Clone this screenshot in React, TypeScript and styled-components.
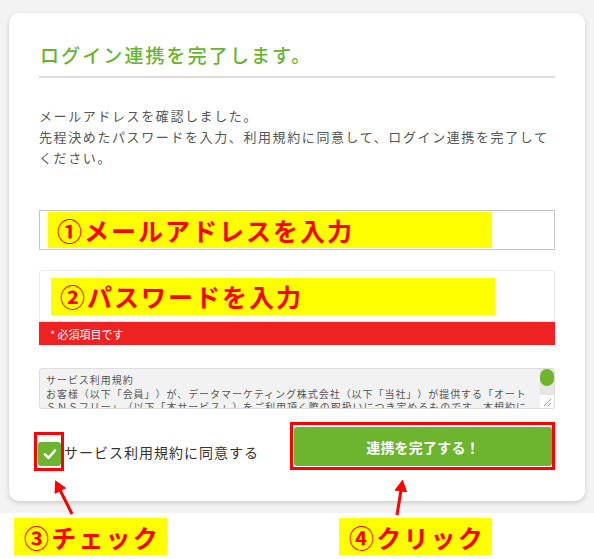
import React from 'react'
import styled, { createGlobalStyle } from 'styled-components'

const GlobalStyle = createGlobalStyle`
  html, body {
    margin: 0;
    padding: 0;
    background: #ffffff;
  }

  body {
    font-family: 'Noto Sans CJK JP', 'Noto Sans', sans-serif;
    text-spacing-trim: space-all;
  }
`

const GREEN = '#6db52e'

const Screen = styled.div`
  position: relative;
  width: 594px;
  height: 559px;
  overflow: hidden;
`

const Backdrop = styled.div`
  background: #f3f3f3;
  padding: 13px 9px 12px 9px;
`

const Card = styled.div`
  background: #ffffff;
  border-radius: 10px;
  box-shadow: 0 2px 5px rgba(0, 0, 0, 0.16);
  padding: 30px 30px 31px 30px;
`

const Title = styled.h2`
  margin: 0;
  padding: 0 0 9px 1px;
  border-bottom: 2px solid #dcdcdc;
  color: #6ab42d;
  font-size: 19px;
  line-height: 24px;
  font-weight: 500;
  letter-spacing: 2.1px;
`

const Lead = styled.p`
  margin: 27px 0 0 0;
  color: #555555;
  font-size: 13px;
  line-height: 21px;
  letter-spacing: 1.6px;
`

const Field = styled.div<{ $height: number; $soft?: boolean }>`
  display: flex;
  align-items: center;
  height: ${(p) => p.$height}px;
  box-sizing: border-box;
  border: 1px solid ${(p) => (p.$soft ? '#ececec' : '#c6c6c6')};
  border-radius: ${(p) => (p.$soft ? '3px 3px 0 0' : '0')};
  padding-left: ${(p) => (p.$soft ? 11 : 8)}px;
`

const EmailField = styled(Field)`
  margin-top: 42px;
`

const PasswordGroup = styled.div`
  margin-top: 20px;
`

const Marker = styled.span<{ $width: number; $height: number }>`
  display: flex;
  align-items: center;
  width: ${(p) => p.$width}px;
  height: ${(p) => p.$height}px;
  box-sizing: border-box;
  padding-left: 9px;
  background: #ffff00;
  color: #ff0000;
  font-size: 25px;
  font-weight: 700;
  letter-spacing: 2px;
  white-space: nowrap;
`

const ErrorBar = styled.div`
  height: 23px;
  display: flex;
  align-items: center;
  padding-left: 11px;
  background: #ee2222;
  color: #ffffff;
  font-size: 11px;
`

const TermsBox = styled.div`
  display: flex;
  margin-top: 23px;
  height: 41px;
  box-sizing: border-box;
  border: 1px solid #dddddd;
  border-radius: 3px;
  background: #f2f2f2;
  overflow: hidden;
`

const Terms = styled.textarea`
  flex: 1;
  min-width: 0;
  margin: 0;
  padding: 4px 4px 0 6px;
  border: 0;
  background: transparent;
  color: #555555;
  font-family: 'Noto Sans CJK JP', sans-serif;
  font-size: 10px;
  line-height: 13.5px;
  letter-spacing: 0.95px;
  text-spacing-trim: space-all;
  resize: none;
  overflow: hidden;
  outline: none;
`

const Rail = styled.div`
  display: flex;
  flex-direction: column;
  width: 14px;
  background: #e6e6e6;
`

const Thumb = styled.span`
  display: block;
  height: 17px;
  border-radius: 7px;
  background: #6fb52c;
`

const Grip = styled.span`
  display: flex;
  margin-top: auto;
  height: 13px;
  background: #ffffff;
`

const ActionRow = styled.div`
  display: flex;
  align-items: flex-end;
  justify-content: space-between;
  margin-top: 13px;
`

const AgreeLabel = styled.label`
  display: flex;
  align-items: center;
  margin: 0 0 -1px -5px;
  color: #333333;
  font-size: 14px;
  letter-spacing: 1px;
`

const RedFrame = styled.span<{ $pad: string }>`
  display: flex;
  align-items: flex-start;
  border: 3px solid #ff0000;
  padding: ${(p) => p.$pad};
`

const CheckBox = styled.span`
  display: flex;
  align-items: center;
  justify-content: center;
  width: 23px;
  height: 24px;
  border-radius: 3px;
  background: ${GREEN};
`

const Submit = styled.button`
  width: 258px;
  height: 39px;
  border: 0;
  border-radius: 3px;
  background: ${GREEN};
  color: #ffffff;
  font-family: 'Noto Sans CJK JP', sans-serif;
  font-size: 14px;
  font-weight: 700;
  letter-spacing: 0.2px;
`

const Notes = styled.div`
  display: flex;
  padding: 5px 0 0 14px;
`

const Note = styled.span<{ $width: number; $gap?: number }>`
  display: flex;
  align-items: center;
  width: ${(p) => p.$width}px;
  height: 37px;
  box-sizing: border-box;
  margin-left: ${(p) => p.$gap || 0}px;
  padding-left: 10px;
  background: #ffff00;
  color: #ff0000;
  font-size: 25px;
  font-weight: 700;
  letter-spacing: 2.2px;
`

const Arrow = styled.svg`
  position: absolute;
  left: 0;
  top: 0;
  pointer-events: none;
`

const TERMS =
  'サービス利用規約\nお客様（以下「会員」）が、データマーケティング株式会社（以下「当社」）が提供する「オートＳＮＳフリー」（以下「本サービス」）をご利用頂く際の取扱いにつき定めるものです。本規約に同意したうえで本サービスをご利用ください。'

export default function App() {
  return (
    <Screen>
      <GlobalStyle />
      <Backdrop>
        <Card>
          <Title>ログイン連携を完了します。</Title>
          <Lead>
            メールアドレスを確認しました。
            <br />
            先程決めたパスワードを入力、利用規約に同意して、ログイン連携を完了してください。
          </Lead>

          <EmailField $height={40}>
            <Marker $width={444} $height={36}>①メールアドレスを入力</Marker>
          </EmailField>

          <PasswordGroup>
            <Field $height={52} $soft>
              <Marker $width={444} $height={37}>②パスワードを入力</Marker>
            </Field>
            <ErrorBar>* 必須項目です</ErrorBar>
          </PasswordGroup>

          <TermsBox>
            <Terms readOnly value={TERMS} />
            <Rail>
              <Thumb />
              <Grip>
                <svg width="14" height="13" viewBox="0 0 14 13">
                  <path d="M4 11 L11 4 M8 11 L11 8" stroke="#9a9a9a" strokeWidth="1" />
                </svg>
              </Grip>
            </Rail>
          </TermsBox>

          <ActionRow>
            <AgreeLabel>
              <RedFrame $pad="7px 0 2px 1px">
                <CheckBox>
                  <svg width="14" height="12" viewBox="0 0 14 12">
                    <path
                      d="M2 6.5 L5.5 9.8 L12 2.5"
                      fill="none"
                      stroke="#ffffff"
                      strokeWidth="2.6"
                      strokeLinecap="round"
                      strokeLinejoin="round"
                    />
                  </svg>
                </CheckBox>
              </RedFrame>
              サービス利用規約に同意する
            </AgreeLabel>
            <RedFrame $pad="2px 0 1px 1px">
              <Submit type="button">連携を完了する！</Submit>
            </RedFrame>
          </ActionRow>
        </Card>
      </Backdrop>

      <Notes>
        <Note $width={153}>③チェック</Note>
        <Note $width={153} $gap={172}>④クリック</Note>
      </Notes>

      <Arrow width="594" height="559">
        <defs>
          <marker id="head" markerWidth="4" markerHeight="4.4" refX="1.5" refY="2.2" orient="auto">
            <path d="M0 0 L4 2.2 L0 4.4 Z" fill="#ff0000" />
          </marker>
        </defs>
        <line x1="72" y1="514" x2="58.5" y2="487" stroke="#ff0000" strokeWidth="3" markerEnd="url(#head)" />
        <line x1="397" y1="515" x2="401.5" y2="487" stroke="#ff0000" strokeWidth="3" markerEnd="url(#head)" />
      </Arrow>
    </Screen>
  )
}
